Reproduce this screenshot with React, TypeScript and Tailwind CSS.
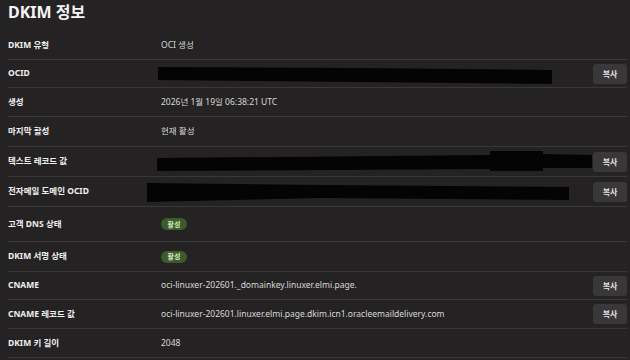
import React from "react";

type Row = {
  label: string;
  h: string;
  value?: React.ReactNode;
  copy?: boolean;
};

const Redact = ({ w, h, off, points }: { w: number; h: number; off: string; points: string }) => (
  <svg width={w} height={h} viewBox={`0 0 ${w} ${h}`} className={`block shrink-0 ${off}`}>
    <polygon points={points} fill="#050404" />
  </svg>
);

const Badge = () => (
  <span className="inline-flex h-[12px] w-[26px] items-center justify-center rounded-full bg-[#3d5a29] text-[7px] font-bold leading-none text-[#d6e6c8]">
    활성
  </span>
);

export default function App() {
  const rows: Row[] = [
    { label: "DKIM 유형", h: "h-[29px]", value: "OCI 생성" },
    {
      label: "OCID",
      h: "h-[28px]",
      copy: true,
      value: <Redact w={400} h={28} off="ml-[-4px]" points="1,7 200,8 395,10 395,24 200,22 1,20" />,
    },
    { label: "생성", h: "h-[29px]", value: "2026년 1월 19일 06:38:21 UTC" },
    { label: "마지막 활성", h: "h-[30px]", value: "현재 활성" },
    {
      label: "텍스트 레코드 값",
      h: "h-[30px]",
      copy: true,
      value: (
        <Redact
          w={436}
          h={30}
          off="ml-[-4px]"
          points="0,11 333,8 333,4 386,4 386,7 435,8 435,21 386,21 386,24 333,24 333,22 0,24"
        />
      ),
    },
    {
      label: "전자메일 도메인 OCID",
      h: "h-[30px]",
      copy: true,
      value: <Redact w={423} h={30} off="ml-[-14px]" points="0,6 173,8 422,10 422,23 173,21 0,25" />,
    },
    { label: "고객 DNS 상태", h: "h-[35px]", value: <Badge /> },
    { label: "DKIM 서명 상태", h: "h-[30px]", value: <Badge /> },
    {
      label: "CNAME",
      h: "h-[28px]",
      copy: true,
      value: "oci-linuxer-202601._domainkey.linuxer.elmi.page.",
    },
    {
      label: "CNAME 레코드 값",
      h: "h-[29px]",
      copy: true,
      value: "oci-linuxer-202601.linuxer.elmi.page.dkim.icn1.oracleemaildelivery.com",
    },
    { label: "DKIM 키 길이", h: "h-[29px]", value: "2048" },
  ];

  return (
    <div
      className="h-[360px] w-[630px] overflow-hidden bg-[#252224] pl-2 pr-[3px]"
      style={{ fontFamily: '"Noto Sans", "Noto Sans CJK KR", sans-serif' }}
    >
      <h1 className="h-[31px] text-[16px] font-bold leading-[24px] text-[#f4f4f4]">DKIM 정보</h1>
      <div className="flex flex-col">
        {rows.map((r) => (
          <div key={r.label} className={`flex items-center border-b border-[#3a3739] ${r.h}`}>
            <div className="w-[153px] shrink-0 text-[8.5px] font-bold text-[#efefef]">{r.label}</div>
            <div className="flex min-w-0 flex-1 items-center text-[8.5px] text-[#d9d9d9]">{r.value}</div>
            {r.copy && (
              <button className="flex h-[20px] w-[34px] shrink-0 items-center justify-center rounded-[3px] bg-[#3a3738] text-[8px] font-bold text-[#e4e4e4]">
                복사
              </button>
            )}
          </div>
        ))}
      </div>
    </div>
  );
}
